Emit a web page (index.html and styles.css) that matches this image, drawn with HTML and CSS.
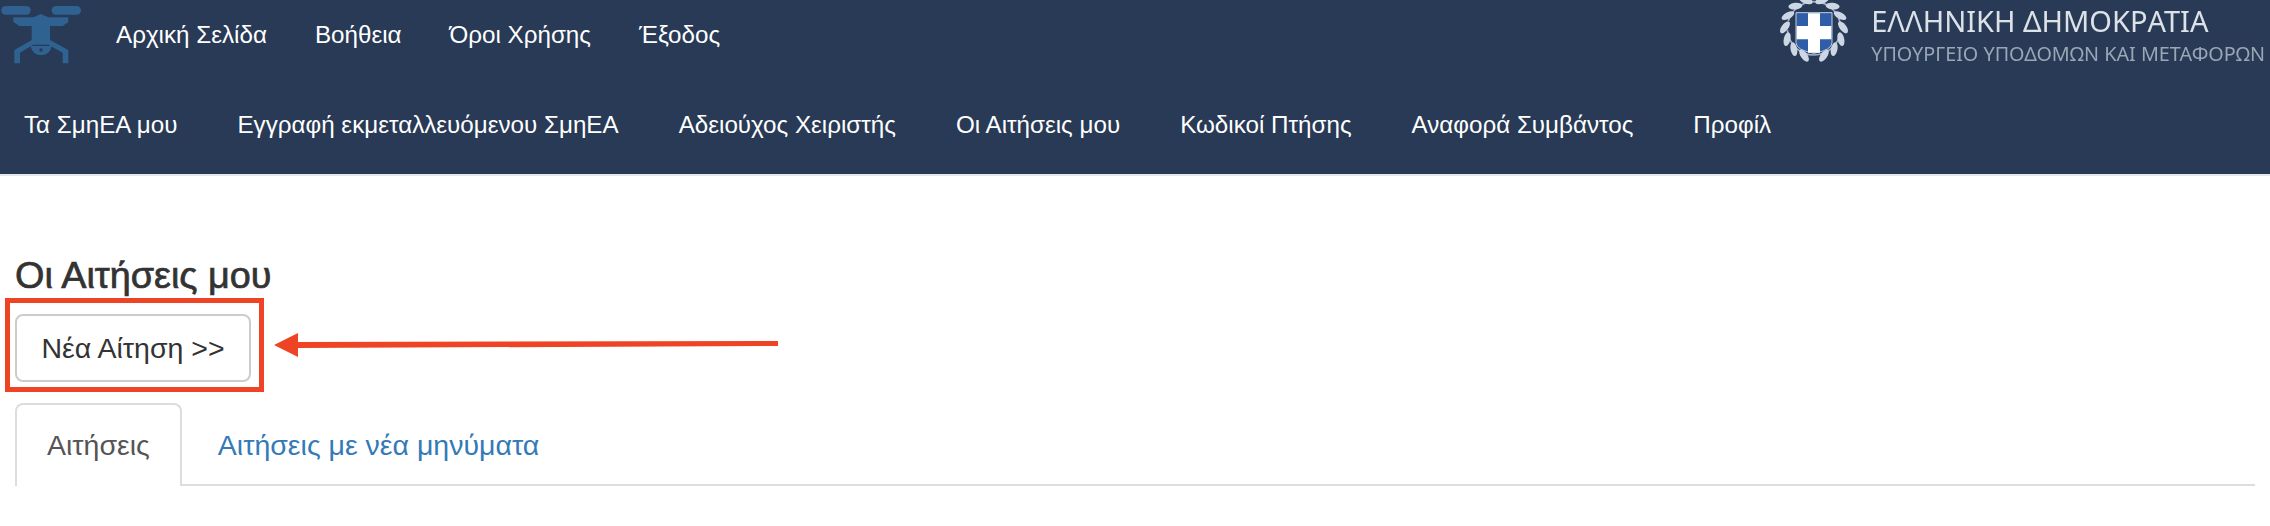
FILE: index.html
```html
<!DOCTYPE html>
<html lang="el">
<head>
    <meta charset="UTF-8">
    <meta name="viewport" content="width=device-width, initial-scale=1.0">
    <title>Οι Αιτήσεις μου</title>
    <link rel="stylesheet" href="styles.css">
</head>
<body>
    <header class="header">
        <div class="top-row">
            <a href="#" class="logo">
                <svg width="100" height="70" viewBox="0 0 300 210">
                    <rect x="4" y="18" width="88" height="26" rx="13" fill="#2f6291"/>
                    <rect x="155" y="18" width="88" height="26" rx="13" fill="#2f6291"/>
                    <path d="M40 52 H100 L122 42 L145 52 H205 V66 L188 78 H150 V120 L205 150 V190 H188 V158 L145 134 H100 L60 158 V190 H43 V150 L95 120 V78 H58 L40 66 Z" fill="#2f6291"/>
                    <path d="M92 138 H155 Q150 165 123 166 Q97 165 92 138 Z" fill="#2f6291"/>
                    <circle cx="123" cy="150" r="5" fill="#283a55"/>
                </svg>
            </a>
            <nav class="top-nav">
                <a href="#">Αρχική Σελίδα</a>
                <a href="#">Βοήθεια</a>
                <a href="#">Όροι Χρήσης</a>
                <a href="#">Έξοδος</a>
            </nav>
            <div class="brand">
                <svg class="emblem" width="72" height="70" viewBox="0 0 216 210">
                    <circle cx="108" cy="85" r="80" fill="none" stroke="#9fb0c8" stroke-width="5" stroke-dasharray="230 28" stroke-dashoffset="-14"/>
                    <g fill="#cdd6e4">
                        <ellipse cx="108" cy="-2" rx="10" ry="21" transform="rotate(16 108 85) rotate(55 108 -2)"/>
                        <ellipse cx="108" cy="-2" rx="10" ry="21" transform="rotate(40 108 85) rotate(55 108 -2)"/>
                        <ellipse cx="108" cy="-2" rx="10" ry="21" transform="rotate(64 108 85) rotate(55 108 -2)"/>
                        <ellipse cx="108" cy="-2" rx="10" ry="21" transform="rotate(88 108 85) rotate(55 108 -2)"/>
                        <ellipse cx="108" cy="-2" rx="10" ry="21" transform="rotate(112 108 85) rotate(55 108 -2)"/>
                        <ellipse cx="108" cy="-2" rx="10" ry="21" transform="rotate(136 108 85) rotate(55 108 -2)"/>
                        <ellipse cx="108" cy="-2" rx="10" ry="21" transform="rotate(160 108 85) rotate(55 108 -2)"/>
                        <ellipse cx="108" cy="-2" rx="10" ry="21" transform="rotate(-16 108 85) rotate(-55 108 -2)"/>
                        <ellipse cx="108" cy="-2" rx="10" ry="21" transform="rotate(-40 108 85) rotate(-55 108 -2)"/>
                        <ellipse cx="108" cy="-2" rx="10" ry="21" transform="rotate(-64 108 85) rotate(-55 108 -2)"/>
                        <ellipse cx="108" cy="-2" rx="10" ry="21" transform="rotate(-88 108 85) rotate(-55 108 -2)"/>
                        <ellipse cx="108" cy="-2" rx="10" ry="21" transform="rotate(-112 108 85) rotate(-55 108 -2)"/>
                        <ellipse cx="108" cy="-2" rx="10" ry="21" transform="rotate(-136 108 85) rotate(-55 108 -2)"/>
                        <ellipse cx="108" cy="-2" rx="10" ry="21" transform="rotate(-160 108 85) rotate(-55 108 -2)"/>
                    </g>
                    <path d="M54 38 H162 V128 Q162 150 108 160 Q54 150 54 128 Z" fill="#2f5da8" stroke="#c3cede" stroke-width="3"/>
                    <path d="M90 40 H126 V78 H160 V118 H126 V158 H90 V118 H56 V78 H90 Z" fill="#fff"/>
                </svg>
                <div class="brand-text">
                    <div class="brand-title">ΕΛΛΗΝΙΚΗ ΔΗΜΟΚΡΑΤΙΑ</div>
                    <div class="brand-sub">ΥΠΟΥΡΓΕΙΟ ΥΠΟΔΟΜΩΝ ΚΑΙ ΜΕΤΑΦΟΡΩΝ</div>
                </div>
            </div>
        </div>
        <nav class="main-nav">
            <a href="#">Τα ΣμηΕΑ μου</a>
            <a href="#">Εγγραφή εκμεταλλευόμενου ΣμηΕΑ</a>
            <a href="#">Αδειούχος Χειριστής</a>
            <a href="#">Οι Αιτήσεις μου</a>
            <a href="#">Κωδικοί Πτήσης</a>
            <a href="#">Αναφορά Συμβάντος</a>
            <a href="#">Προφίλ</a>
        </nav>
    </header>

    <main class="content">
        <h4 class="page-title">Οι Αιτήσεις μου</h4>
        <div class="action">
            <button type="button" class="btn">Νέα Αίτηση &gt;&gt;</button>
            <div class="callout-box"></div>
            <svg class="callout-arrow" width="510" height="26" viewBox="0 0 510 26">
                <path d="M0 14 L24 2 V11 L504 10 V15 L24 17 V26 Z" fill="#ee4325"/>
            </svg>
        </div>
        <ul class="tabs">
            <li class="tab active"><a href="#">Αιτήσεις</a></li>
            <li class="tab"><a href="#">Αιτήσεις με νέα μηνύματα</a></li>
        </ul>
        <div class="table-head">
            <div>Τύπος</div>
            <div>Ημερομηνία</div>
            <div>Κατάσταση</div>
            <div>Ενέργειες</div>
            <div>Μήνυμα</div>
        </div>
    </main>
</body>
</html>
```

FILE: styles.css
```css
body {
    font-family: "Liberation Sans", Arial, sans-serif;
    font-size: 28.5px;
    color: #333;
    background-color: #fff;
    margin: 0;
    height: 526px;
    overflow: hidden;
}

a {
    text-decoration: none;
}

.header {
    background-color: #283a55;
    height: 174px;
    border-bottom: 2px solid #e7e7e7;
}

.top-row {
    display: flex;
    align-items: center;
    height: 70px;
}

.logo {
    display: block;
    height: 70px;
    margin-right: 16px;
    filter: blur(0.4px);
}

.top-nav {
    display: flex;
    gap: 48px;
}

.top-nav a,
.main-nav a {
    color: #fff;
    font-size: 24.2px;
    line-height: 30px;
}

.brand {
    display: flex;
    align-items: flex-start;
    margin-left: auto;
    padding-right: 5px;
}

.emblem {
    margin-right: 21px;
    filter: blur(0.6px);
}

.brand-text {
    padding-top: 5px;
    font-family: "Noto Sans", sans-serif;
    filter: blur(0.4px);
}

.brand-title {
    color: #dde2e8;
    font-size: 29px;
    line-height: 32px;
}

.brand-sub {
    color: #9aa6b5;
    font-size: 19.8px;
    line-height: 24px;
    margin-top: 5px;
    white-space: nowrap;
}

.main-nav {
    display: flex;
    gap: 60px;
    padding: 40px 24px 0;
}

.content {
    padding: 0 15px;
}

.page-title {
    font-size: 37.8px;
    font-weight: normal;
    -webkit-text-stroke: 0.7px #333;
    line-height: 38px;
    margin: 0;
    padding-top: 80px;
}

.action {
    position: relative;
    width: 236px;
    margin-top: 20px;
}

.btn {
    display: block;
    width: 236px;
    height: 68px;
    padding: 0;
    font-family: inherit;
    font-size: 28.5px;
    color: #333;
    background-color: #fff;
    border: 2px solid #ccc;
    border-radius: 8px;
}

.callout-box {
    position: absolute;
    left: -10px;
    top: -16px;
    width: 249px;
    height: 84px;
    border: 5px solid #ee4325;
}

.callout-arrow {
    position: absolute;
    left: 259px;
    top: 17px;
}

.tabs {
    display: flex;
    gap: 4px;
    list-style: none;
    margin: 21px 0 0;
    padding: 0;
    height: 81px;
    border-bottom: 2px solid #ddd;
}

.tab a {
    display: block;
    height: 81px;
    line-height: 81px;
    padding: 0 30px;
    color: #337ab7;
    border: 2px solid transparent;
    border-bottom: 0;
    border-radius: 8px 8px 0 0;
    box-sizing: border-box;
}

.tab.active a {
    height: 83px;
    color: #555;
    background-color: #fff;
    border-color: #ddd;
}

.table-head {
    display: grid;
    grid-template-columns: 424px 727px 407px 358px 1fr;
    padding-left: 17px;
    margin-top: 35px;
    font-weight: bold;
    line-height: 30px;
}
```
